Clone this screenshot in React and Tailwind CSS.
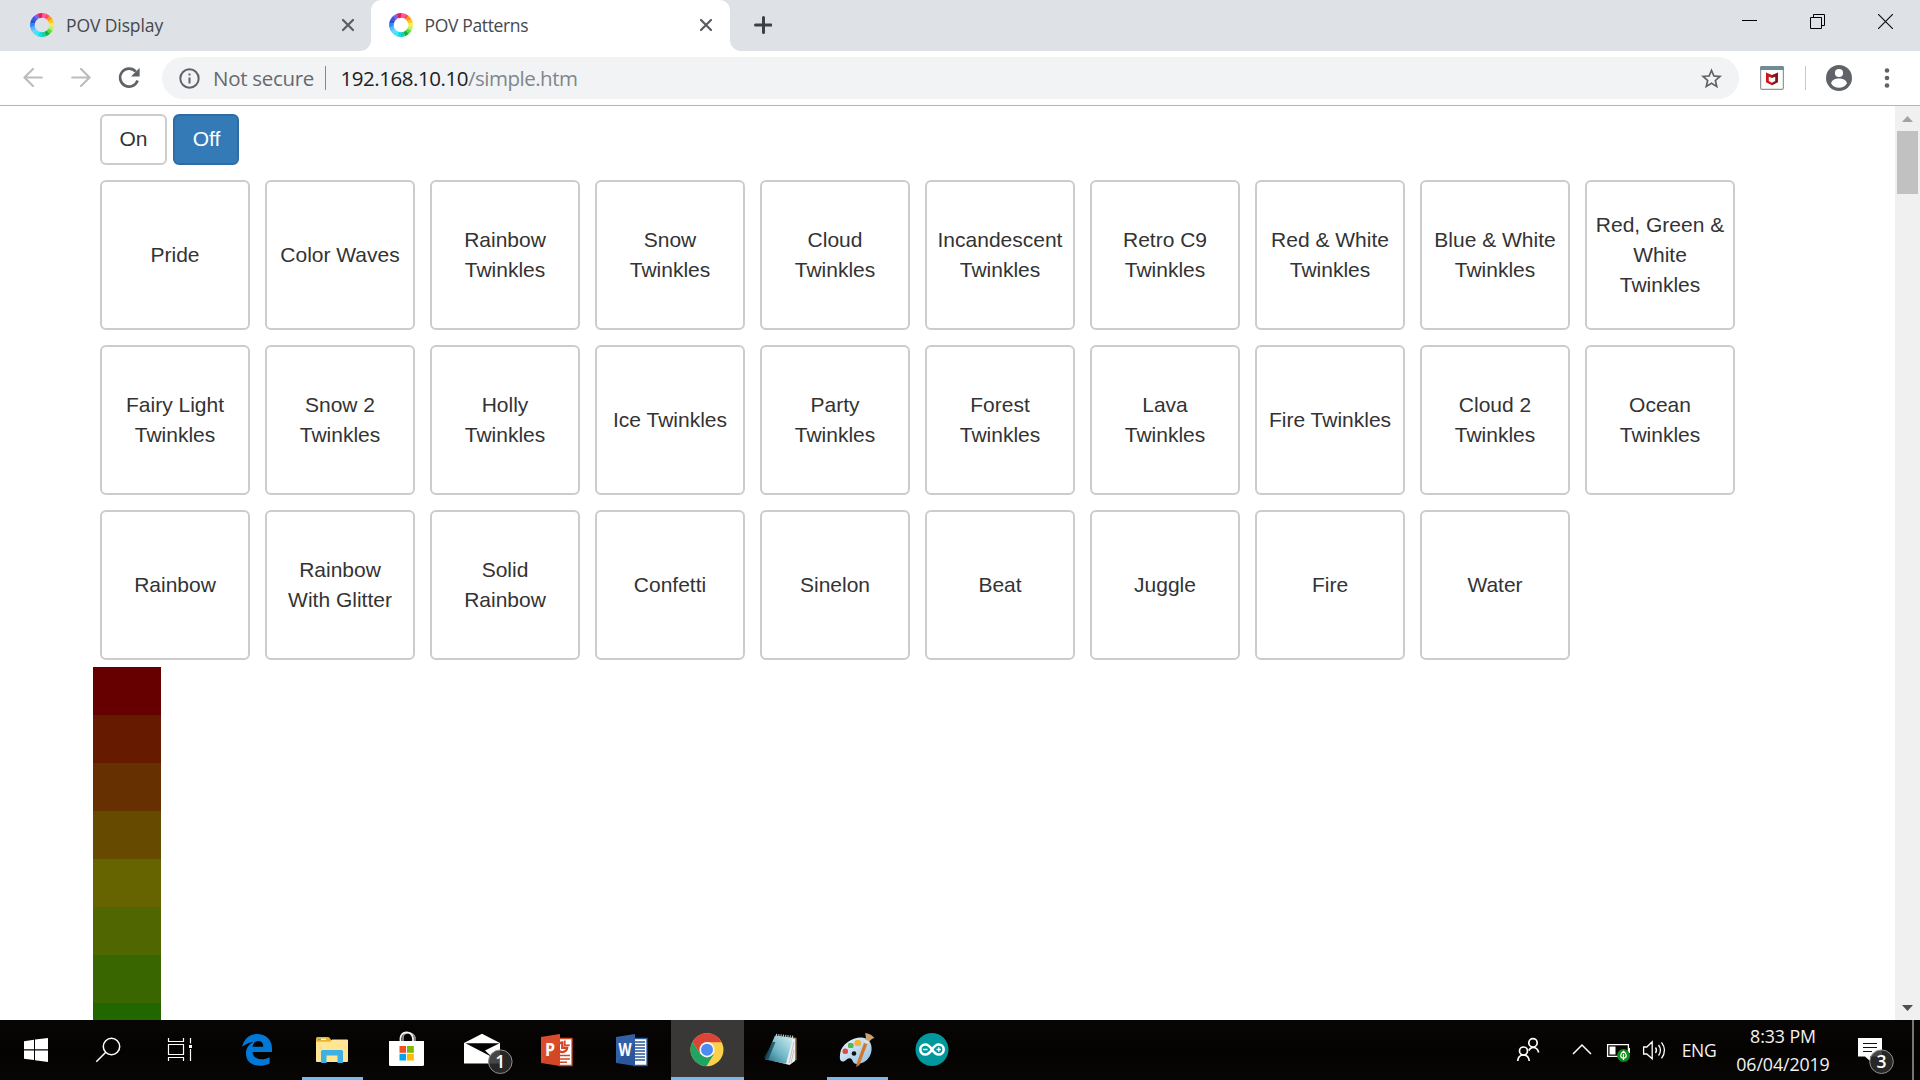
const ROWS = [
  ["Pride", "Color Waves", "Rainbow Twinkles", "Snow Twinkles", "Cloud Twinkles", "Incandescent Twinkles", "Retro C9 Twinkles", "Red & White Twinkles", "Blue & White Twinkles", "Red, Green & White Twinkles"],
  ["Fairy Light Twinkles", "Snow 2 Twinkles", "Holly Twinkles", "Ice Twinkles", "Party Twinkles", "Forest Twinkles", "Lava\nTwinkles", "Fire Twinkles", "Cloud 2 Twinkles", "Ocean Twinkles"],
  ["Rainbow", "Rainbow\nWith Glitter", "Solid Rainbow", "Confetti", "Sinelon", "Beat", "Juggle", "Fire", "Water"],
];

const SWATCHES = ["#660000", "#661a00", "#663000", "#664a00", "#666400", "#506600", "#3a6600", "#226600"];

const RING = ["#ff5aa0", "#ff4a6a", "#ff9a10", "#ffc81e", "#f6ee50", "#b4f560", "#5fdc3c", "#14b43c", "#14d2aa", "#1ed7e6", "#28f0f5", "#6ed2ff", "#5ab4ff", "#1e8cff", "#2850d2", "#4655dc", "#7864eb", "#f51450"];

function Favicon() {
  const step = 360 / RING.length;
  const point = (deg) => {
    const a = ((deg - 90) * Math.PI) / 180;
    return `${12 + 9.6 * Math.cos(a)} ${12 + 9.6 * Math.sin(a)}`;
  };
  return (
    <svg className="size-6 shrink-0" viewBox="0 0 24 24" fill="none" strokeWidth="4.6">
      {RING.map((c, i) => (
        <path key={c} stroke={c} d={`M${point(i * step - 0.5)}A9.6 9.6 0 0 1 ${point((i + 1) * step + 0.5)}`} />
      ))}
    </svg>
  );
}

function CloseX() {
  return (
    <svg className="size-[14px] shrink-0" viewBox="0 0 14 14" stroke="#5a5d61" strokeWidth="2.2" strokeLinecap="round">
      <path d="M2 2l10 10M12 2L2 12" />
    </svg>
  );
}

function TabStrip() {
  return (
    <div className="flex h-[51px] shrink-0 bg-white text-[17.5px] text-[#45484d]">
      <div className="flex w-[371px] shrink-0 items-center rounded-br-[11px] bg-[#dee1e6] pb-px pl-[29.5px] pr-4">
        <Favicon />
        <span className="ml-[12.5px] grow tracking-[-0.1px]">POV Display</span>
        <CloseX />
      </div>
      <div className="w-[359px] shrink-0 bg-[#dee1e6]">
        <div className="flex h-full items-center rounded-t-[10px] bg-white pb-px pl-[18px] pr-[17px]">
          <Favicon />
          <span className="ml-[11.5px] grow tracking-[-0.35px]">POV Patterns</span>
          <CloseX />
        </div>
      </div>
      <div className="flex grow rounded-bl-[11px] bg-[#dee1e6]">
        <svg className="ml-6 mt-4 size-[18px]" viewBox="0 0 18 18" stroke="#3c4043" strokeWidth="3" strokeLinecap="round">
          <path d="M9.500 1.500v15M1.500 9h15.500" />
        </svg>
        <div className="ml-auto flex h-[43px] items-center">
          <div className="flex w-[68px] justify-center">
            <svg className="size-[15px]" viewBox="0 0 15 15"><path d="M0 6h15v1H0z" /></svg>
          </div>
          <div className="flex w-[68px] justify-center">
            <svg className="size-[15px]" viewBox="0 0 15 15" fill="none" stroke="#000">
              <path d="M.5 3.500h11v11H.5zM3.500 3.500v-3h11v11h-3" />
            </svg>
          </div>
          <div className="flex w-[69px] justify-center">
            <svg className="size-[15px]" viewBox="0 0 15 15" stroke="#111" strokeWidth="1.2"><path d="M0 0l15 15M15 0L0 15" /></svg>
          </div>
        </div>
      </div>
    </div>
  );
}

function Toolbar() {
  return (
    <div className="flex h-[55px] shrink-0 border-b border-[#b2b4b6] bg-white pt-[6px]">
      <div className="flex h-[42px] w-[162px] shrink-0 items-center pl-[23px]">
        <svg className="size-5" viewBox="0 0 20 20" fill="none" stroke="#babcbe" strokeWidth="2.1" strokeLinecap="round" strokeLinejoin="round">
          <path d="M18.8 9.500H1.500M10 .9L1.400 9.500l8.600 8.600" />
        </svg>
        <svg className="ml-7 size-5" viewBox="0 0 20 20" fill="none" stroke="#babcbe" strokeWidth="2.1" strokeLinecap="round" strokeLinejoin="round">
          <path d="M1.200 9.500h17.300M10 .9l8.600 8.600-8.600 8.600" />
        </svg>
        <svg className="ml-[27px] size-[22px]" viewBox="0 0 22 22" fill="none">
          <path d="M17.8 4.600A9 9 0 1 0 19.600 13.500" stroke="#5f6368" strokeWidth="2.600" />
          <path d="M21.600 1v8.600H13z" fill="#5f6368" />
        </svg>
      </div>
      <div className="flex h-[42px] w-[1577px] shrink-0 items-center rounded-full bg-[#f1f3f4] pl-[17px] pr-[16.5px] text-[20.5px]">
        <svg className="size-[21px]" viewBox="0 0 21 21" fill="none" stroke="#5f6368" strokeWidth="2">
          <circle cx="10.5" cy="10.5" r="9.2" />
          <path d="M10.5 9.400v6M10.5 5.400v2.200" />
        </svg>
        <span className="ml-[13px] tracking-[-0.3px] text-[#66696e]">Not secure</span>
        <span className="ml-[11px] h-6 w-[1.5px] bg-[#85888c]" />
        <span className="ml-[14px] tracking-[-0.45px] text-[#202124]">192.168.10.10</span>
        <span className="tracking-[-0.5px] text-[#80868b]">/simple.htm</span>
        <svg className="ml-auto size-[23px]" viewBox="0 0 24 24" fill="#5f6368">
          <path d="M22 9.240l-7.190-.62L12 2 9.190 8.630 2 9.240l5.460 4.730L5.820 21 12 17.270 18.180 21l-1.630-7.030L22 9.240zM12 15.400l-3.760 2.270 1-4.280-3.320-2.880 4.380-.38L12 6.100l1.710 4.040 4.380.38-3.320 2.880 1 4.280L12 15.400z" transform="translate(-1.2 -1) scale(1.1)" />
        </svg>
      </div>
      <div className="flex h-[42px] grow items-center pl-[21px]">
        <svg className="size-6" viewBox="0 0 24 24">
          <rect x=".6" y=".6" width="22.8" height="22.8" rx="1.6" fill="#fcfcfc" stroke="#939699" strokeWidth="1.2" />
          <path d="M0 1.500Q0 0 1.500 0h21Q24 0 24 1.500V4H0z" fill="#6f8b96" />
          <path d="M6 6.500l6 2.500v3l-3.200-1.300v4.400l3.200 1.600v2.600l-6-3z" fill="#d3131b" />
          <path d="M18 6.500l-6 2.500v3l3.200-1.300v4.400l-3.200 1.600v2.600l6-3z" fill="#86141a" />
        </svg>
        <span className="ml-[21px] h-6 w-px bg-[#c8cacd]" />
        <svg className="ml-5 size-[26px]" viewBox="0 0 26 26">
          <circle cx="13" cy="13" r="13" fill="#5f6368" />
          <circle cx="13" cy="8" r="4.100" fill="#fff" />
          <path d="M5.200 18.400c.2-3.800 5-4.900 7.800-4.900s7.600 1.100 7.800 4.900C19 21.300 16.300 22.700 13 22.700s-6-1.400-7.800-4.300z" fill="#fff" />
        </svg>
        <svg className="ml-[32px] h-5 w-[6px]" viewBox="0 0 6 20" fill="#5f6368">
          <circle cx="3" cy="2.500" r="2.300" /><circle cx="3" cy="10" r="2.300" /><circle cx="3" cy="17.500" r="2.300" />
        </svg>
      </div>
    </div>
  );
}

function Page() {
  return (
    <div className="flex min-h-0 grow bg-white">
      <main className="min-w-0 grow overflow-hidden pt-2 font-['Liberation_Sans',Arial,sans-serif] text-[21px] leading-[30px] text-[#333]">
        <div className="ml-[100px] flex gap-[6px]">
          <button className="h-[51px] w-[67px] rounded-[6px] border-2 border-[#ccc] bg-white pb-px">On</button>
          <button className="h-[51px] w-[66px] rounded-[6px] border-2 border-[#2e6da4] bg-[#337ab7] pb-px pl-px text-white">Off</button>
        </div>
        <div className="ml-[100px] mt-[15px] flex flex-col gap-[15px]">
          {ROWS.map((row) => (
            <div key={row[0]} className="flex gap-[15px]">
              {row.map((name) => (
                <button key={name} className="size-[150px] shrink-0 whitespace-pre-line rounded-[6px] border-2 border-[#ccc] bg-white px-[7px]">{name}</button>
              ))}
            </div>
          ))}
        </div>
        <div className="ml-[93px] mt-[7px] w-[68px]">
          {SWATCHES.map((c) => (
            <div key={c} className="h-12" style={{ backgroundColor: c }} />
          ))}
        </div>
      </main>
      <div className="flex w-[25px] shrink-0 flex-col items-center bg-[#f0f0f0]">
        <svg className="mt-[10px] h-[6px] w-[11px] shrink-0" viewBox="0 0 11 6" fill="#a3a3a3"><path d="M0 6L5.500 0 11 6z" /></svg>
        <div className="mt-[9px] h-[63px] w-[21px] shrink-0 bg-[#c1c1c1]" />
        <svg className="mb-[9px] mt-auto h-[6px] w-[11px] shrink-0" viewBox="0 0 11 6" fill="#505050"><path d="M0 0l5.500 6L11 0z" /></svg>
      </div>
    </div>
  );
}

/* Every taskbar slot is drawn on a 75x60 canvas (72x60 for the system buttons). */
function Slot({ children }) {
  return <svg className="h-[60px] w-[75px] shrink-0" viewBox="0 0 75 60">{children}</svg>;
}

function SystemSlot({ children }) {
  return <svg className="h-[60px] w-[72px] shrink-0" viewBox="0 0 72 60">{children}</svg>;
}

function Badge({ x, y, n }) {
  return (
    <g>
      <circle cx={x} cy={y} r="11.800" fill="#2c2c2c" fillOpacity=".88" stroke="#8f8f8f" strokeWidth="1" />
      <text x={x} y={y + 6.300} textAnchor="middle" fill="#fff" fontSize="17.500" fontWeight="600" fontFamily="'Open Sans', sans-serif">{n}</text>
    </g>
  );
}

function OfficeIcon({ color, dark, letter, children }) {
  return (
    <Slot>
      <path d="M40 18.500h13v27h-13z" fill="#fff" stroke={color} strokeWidth="1.300" />
      {children}
      <path d="M22 17l19-3v32l-19-3z" fill={color} />
      <path d="M22 17l19-3v9L22 43z" fill={dark} fillOpacity=".2" />
      <text x="31" y="36" textAnchor="middle" fill="#fff" fontSize="17.500" fontWeight="700" fontFamily="'Open Sans', sans-serif" textLength={letter === "P" ? 10 : 13} lengthAdjust="spacingAndGlyphs">{letter}</text>
    </Slot>
  );
}

function Taskbar() {
  return (
    <div className="flex h-[60px] shrink-0 bg-[#050403] bg-linear-to-b from-[#080604] via-[#040302] to-[#070605] text-[#f2f2f2]">
      <SystemSlot>
        <path fill="#fff" d="M24 21.300l10-1.500v9.500H24zM35 19.600L48 18v11.300H35zM24 30.500h10v9.600l-10-1.400zM35 30.500h13V42l-13-1.700z" />
      </SystemSlot>
      <SystemSlot>
        <g fill="none" stroke="#fff" strokeWidth="1.500"><circle cx="39.500" cy="26.500" r="8.200" /><path d="M33.800 32.300L24.300 41.800" /></g>
      </SystemSlot>
      <SystemSlot>
        <g fill="none" stroke="#fff" strokeWidth="1.200">
          <path d="M24.500 18v3.500h15V18M24.500 24.500h15v10h-15zM24.500 41v-3.500h15V41M46.500 18v5.500M46.500 29v12" />
        </g>
        <path fill="#fff" d="M45 25h3v3h-3z" />
      </SystemSlot>
      <div className="w-[3px] shrink-0" />

      <Slot>
        <path fill="#0078d7" transform="translate(22.500 13.500) scale(1.260)" d="M.5 10.800C1.700 4.800 6 .4 12.400.4c7 0 11.800 4.600 11.800 11.200v3H8.800c.1 4 3.500 5.900 7.200 5.900 2.400 0 4.500-.7 6.300-1.700v5.100c-2.200 1.100-4.800 1.700-7.700 1.700C7.800 25.600 3.500 21.800 3.500 15.900c0-4.200 2.300-7.400 5.800-9.200C5.200 7.200 2 8.900.5 10.800zM8.900 10.600h8.400c0-2.900-1.500-4.600-4.100-4.600-2.500 0-4 1.800-4.300 4.600z" />
      </Slot>

      <Slot>
        <path fill="#e9b52e" d="M22 18.500q0-1.500 1.500-1.500H34q1.500 0 2.500 2l.8 1.500H53q1 0 1 1V26H22z" />
        <path fill="#ffe594" d="M22 21.800h14l2-2.300h15q1 0 1 1V41q0 1-1 1H23q-1 0-1-1z" />
        <path fill="#fff" d="M25 18.700h7v1.200h-7z" /><path fill="#39b3a0" d="M24 18.700h3v1.200h-3z" />
        <path fill="#3db1e6" d="M27 43V31.500q0-1.500 1.500-1.500h19q1.500 0 1.500 1.500V43h-5.500v-7.500h-11V43z" />
        <path fill="#76b9ed" d="M8 57h61v3H8z" />
      </Slot>

      <Slot>
        <path fill="none" stroke="#9c9c9c" strokeWidth="1.600" d="M34 21.500v-4c0-6 10-6 12 0v4" />
        <path fill="none" stroke="#f4f4f4" strokeWidth="1.800" d="M31.500 21.500V18c1-7 10.500-8 12.500 0v3.500" />
        <path fill="#fff" d="M20 21h35v23.500q0 1.500-1.500 1.500h-32q-1.500 0-1.500-1.500z" />
        <path fill="#f25022" d="M30.500 26h6.500v6.800h-6.500z" /><path fill="#7fba00" d="M38 26h6.800v6.800H38z" />
        <path fill="#00a4ef" d="M30.500 33.800h6.500v6.700h-6.500z" /><path fill="#ffb900" d="M38 33.800h6.800v6.700H38z" />
      </Slot>

      <Slot>
        <path fill="#fff" d="M20 23l18-9.300L56 23v20.500H20z" />
        <path fill="#050403" d="M21.500 23.300h34L41 30.500l7 6.500z" />
        <Badge x={56.300} y={41.700} n="1" />
      </Slot>

      <OfficeIcon color="#d24726" dark="#ff6a3c" letter="P">
        <g fill="none" stroke="#d24726">
          <path strokeWidth="2.400" d="M43.300 22.500a4.800 4.800 0 1 0 4.900 5.200h-4.900z" />
          <path strokeWidth="1.600" d="M45.800 20.500v4.800h5M41 35.500h10M41 39h10M41 42.300h7" />
        </g>
      </OfficeIcon>
      <OfficeIcon color="#2b579a" dark="#4b86dd" letter="W">
        <path fill="none" stroke="#2b579a" strokeWidth="1.300" d="M40 22h11M40 25h11M40 28h11M40 31h11M40 34h11M40 37h11M40 40h11" />
      </OfficeIcon>

      <Slot>
        <path fill="#3a3837" d="M2 0h73v60H2z" /><path fill="#76b9ed" d="M2 57h73v3H2z" />
        <g transform="translate(38 29.700)">
          <circle r="16.500" fill="#fbd04b" />
          <path fill="#1fa463" d="M-14.400-8A16.500 16.500 0 0 0-.6 16.500L7 4.200 0 8-7 4z" />
          <path fill="#db4437" d="M-14.400-8A16.500 16.500 0 0 1 14.700-7.500H0L-7 4z" />
          <circle r="7.600" fill="#f4f4f4" /><circle r="6" fill="#4c8bf5" />
        </g>
      </Slot>

      <Slot>
        <defs>
          <linearGradient id="pad" x1="0" y1="1" x2="1" y2="0"><stop offset="0" stopColor="#1d6478" /><stop offset=".45" stopColor="#70b7c7" /><stop offset="1" stopColor="#d8f1f5" /></linearGradient>
        </defs>
        <path fill="#a98646" d="M48 17l4.500 1v22l-5 1z" />
        <path fill="#eee" d="M47.500 18l3.500 1v22l-5.500 4-16-4z" />
        <path fill="url(#pad)" d="M31 15.500l18 2.200-7 26L21 39.500z" />
        <path fill="#123f4c" fillOpacity=".75" d="M28.500 22l3 0L24 40l-4-2.500z" />
        <path stroke="#c9c9c9" strokeWidth="2.400" strokeDasharray="1.100 1.200" d="M32 15l18 2" />
        <path fill="none" stroke="#aaa" strokeWidth=".7" d="M50 22l-5 21M50 30l-3 13" />
      </Slot>

      <Slot>
        <defs><linearGradient id="pal" x1="0" y1="0" x2="1" y2="1"><stop offset="0" stopColor="#edf7fe" /><stop offset="1" stopColor="#8fbfe4" /></linearGradient></defs>
        <path fill="url(#pal)" d="M42 17.500c7 0 11.500 5.500 10.500 13C51.500 39 44.500 44 38 44c-5 0-3.500-5-7-5.800-3-.7-5 4.300-8.300 3-2.200-1-2-4-1.500-8 1-8.500 11.500-15.700 20.800-15.700z" />
        <circle cx="35" cy="33.500" r="2.300" fill="#101010" />
        <rect x="23.500" y="28.500" width="5.500" height="5.500" rx="2.500" fill="#e04a45" />
        <rect x="29" y="23" width="5.500" height="5" rx="1.500" fill="#57b450" />
        <rect x="35.500" y="20" width="6.500" height="6" rx="2.500" fill="#f6b32c" />
        <path fill="#d5772a" d="M45 23l3.300 1.200L40.500 45l-3.300 2 .6-4z" />
        <path fill="#cda271" d="M46 13.500c3-1 7 1.500 9.500 4.500-2.500.5-4 1.800-6 4.500l-3.200-1.500c.7-3 .7-5-.3-7.500z" />
        <path stroke="#e6e6e6" strokeWidth="2" d="M45.500 20.600l4.200 1.700" />
        <path fill="#76b9ed" d="M8 57h61v3H8z" />
      </Slot>

      <Slot>
        <g transform="translate(-.5 0)">
          <circle cx="38.500" cy="29.500" r="16.500" fill="#00979d" />
          <g fill="none" stroke="#fff">
            <path strokeWidth="2.600" d="M38.500 29.500c-3-4.600-5.200-5-6.700-5a5 5 0 0 0 0 10c1.500 0 3.700-.4 6.700-5s5.200-5 6.700-5a5 5 0 0 1 0 10c-1.500 0-3.700-.4-6.700-5z" />
            <path strokeWidth="1.300" d="M29.500 29.500h4.500M43 29.500h4.500M45.250 27.300v4.500" />
          </g>
        </g>
      </Slot>

      <div className="ml-auto flex shrink-0 font-['Open_Sans','Noto_Sans',sans-serif]">
        <svg className="h-[60px] w-[57px]" viewBox="0 0 57 60" fill="none" stroke="#fff" strokeWidth="1.700">
          <circle cx="33" cy="22.800" r="4.200" /><circle cx="23.500" cy="31" r="4" />
          <path d="M28.800 30.500c1-2 2.400-3 4.200-3 3 0 5 2 5.700 5M17.700 41c.3-3.600 2.500-6 5.800-6s5.300 2.400 5.800 6" />
        </svg>
        <svg className="h-[60px] w-[43px]" viewBox="0 0 43 60" fill="none" stroke="#fff" strokeWidth="1.500"><path d="M16 34l9-9 9 9" /></svg>
        <svg className="h-[60px] w-[36px]" viewBox="0 0 36 60">
          <path fill="none" stroke="#fff" strokeWidth="1.300" d="M7.600 24.600h20.800v11.800H7.600z" />
          <path fill="#fff" d="M9.500 26.500h6v8h-6zM28.500 28h1.500v5h-1.500z" />
          <circle cx="23.500" cy="35.500" r="6.500" fill="#12891b" />
          <path fill="none" stroke="#fff" strokeWidth="1.200" d="M23.500 31.300c-4 3-3.500 6.500 0 7 3.500-.5 4-4 0-7zM23.500 34v6" />
        </svg>
        <svg className="h-[60px] w-[36px]" viewBox="0 0 36 60" fill="none" stroke="#fff" strokeWidth="1.300">
          <path d="M7.600 27h3.200l5.400-5.200v17L10.800 34H7.600zM19.500 27.500q2 2.700 0 5.500M22.500 25q4 5.200 0 10.500M25.500 22.300q6 8 0 16" />
        </svg>
        <div className="flex w-[54px] items-center justify-center text-[17.500px]"><span className="tracking-[-0.3px]">ENG</span></div>
        <div className="flex w-[114px] flex-col items-center pt-[2px] text-[17.800px] leading-[28px] tracking-[-0.1px]">
          <span>8:33 PM</span>
          <span>06/04/2019</span>
        </div>
        <svg className="h-[60px] w-[72px]" viewBox="0 0 72 60">
          <path fill="#fff" d="M18 18h24v18.500H30V41l-5-4.500h-7z" />
          <path stroke="#111" strokeWidth="1.200" d="M23 23.500h14M23 27.500h14M23 31.500h9" />
          <Badge x={41.500} y={41.700} n="3" />
        </svg>
        <div className="mr-[6px] w-[2px] bg-[#757575]" />
      </div>
    </div>
  );
}

export default function App() {
  return (
    <div className="flex h-screen w-full flex-col overflow-hidden bg-white font-['Open_Sans','Noto_Sans',sans-serif]">
      <TabStrip />
      <Toolbar />
      <Page />
      <Taskbar />
    </div>
  );
}
